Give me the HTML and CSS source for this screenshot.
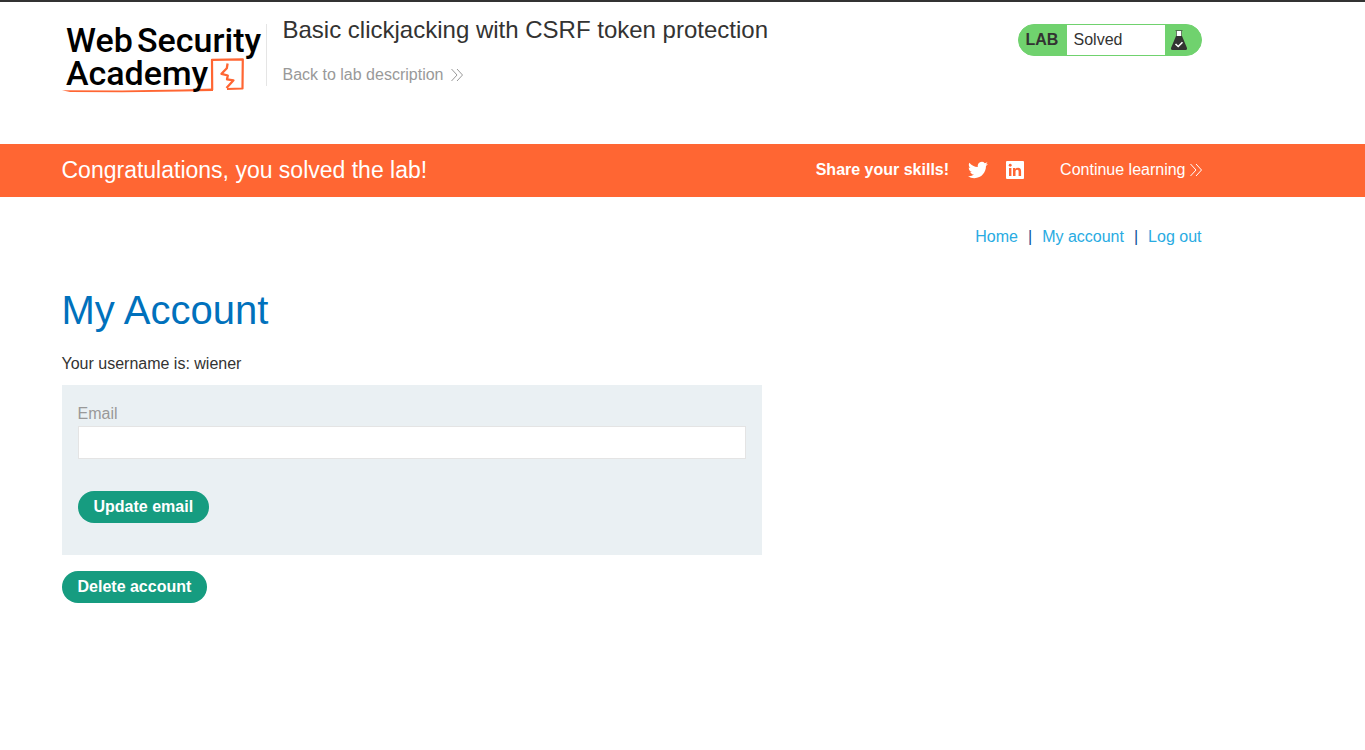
FILE: index.html
```html
<!DOCTYPE html>
<html lang="en">
<head>
<meta charset="utf-8">
<meta name="viewport" content="width=device-width, initial-scale=1">
<title>Basic clickjacking with CSRF token protection</title>
<link rel="stylesheet" href="styles.css">
</head>
<body>
<header class="lab-header">
  <div class="container lab-header-row">
    <a class="logo" href="#" aria-label="Web Security Academy">
      <svg width="200" height="72" viewBox="0 0 200 72">
        <path fill="#ff6633" d="M0 68.200 L60 68.600 L120 67.400 L151 66.600 V68.900 L120 69.400 L60 70.300 L8 69.900 Z"/>
        <g fill="none" stroke="#ff6633" stroke-linejoin="round">
          <path stroke-width="2.200" d="M150.200 68 L150 37.800 L180.800 37.300 L180.500 66.500 L165 67"/>
          <path stroke-width="2.300" d="M165.600 41.500 L164.800 46.200 L159.500 51.800 L165.800 53.500 L165 57.300 L171.500 58.300 L164.500 66"/>
        </g>
        <g class="logo-text">
          <text x="4" y="30">Web</text>
          <text x="75" y="30">Security</text>
          <text x="4" y="63">Academy</text>
        </g>
      </svg>
    </a>
    <div class="title-block">
      <h2 class="title">Basic clickjacking with CSRF token protection</h2>
      <a class="back-link" href="#">Back to lab description
        <svg class="chevrons" width="12" height="14" viewBox="0 0 12 14"><path d="M.5 1 L6 7 L.5 13 M6 1 L11.500 7 L6 13"/></svg>
      </a>
    </div>
    <div class="status">
      <span class="status-tag">LAB</span>
      <p class="status-text">Solved</p>
      <span class="status-icon">
        <svg width="16" height="20" viewBox="0 0 16 20">
          <path fill="#fff" d="M5.500 1h5v5h-5z"/>
          <path fill="none" stroke="#333332" stroke-opacity=".6" d="M4.500 .5h7M5.500 1v5M10.500 1v5"/>
          <path fill="#333332" d="M5 6h6l5 12q.3 2-1.300 2H1.300Q-.3 20 0 18z"/>
          <path fill="none" stroke="#fff" stroke-width="1.600" d="M4.500 14 L7.200 16.500 L11.500 12.200"/>
        </svg>
      </span>
    </div>
  </div>
</header>
<section class="banner">
  <div class="container banner-row">
    <h4 class="banner-title">Congratulations, you solved the lab!</h4>
    <div class="share">
      <span class="share-label">Share your skills!</span>
      <a class="social" href="#" aria-label="Twitter">
        <svg width="20" height="18" viewBox="0 2 24 20"><path fill="#fff" d="M23.950 4.570a10 10 0 0 1-2.820.77 4.960 4.960 0 0 0 2.160-2.720 9.900 9.900 0 0 1-3.120 1.190 4.920 4.920 0 0 0-8.380 4.480C7.690 8.090 4.070 6.130 1.640 3.160a4.820 4.820 0 0 0-.67 2.480c0 1.710.87 3.210 2.190 4.100a4.900 4.900 0 0 1-2.230-.62v.06a4.920 4.920 0 0 0 3.950 4.830 5 5 0 0 1-2.210.08 4.940 4.940 0 0 0 4.600 3.420A9.870 9.870 0 0 1 0 19.540a14 14 0 0 0 7.550 2.210c9.050 0 14-7.500 14-13.980 0-.21 0-.42-.02-.63a9.940 9.940 0 0 0 2.420-2.570z"/></svg>
      </a>
      <a class="social" href="#" aria-label="LinkedIn">
        <svg width="18" height="18" viewBox="0 0 18 18"><rect width="18" height="18" rx="1" fill="#fff"/><path fill="#ff6633" d="M3 7h2.400v8H3zM7 7h2.300v1.200C10 7.200 10.800 6.800 12 6.800c2.300 0 3.100 1.400 3.100 3.600V15h-2.500v-4.200c0-1.100-.3-2-1.400-2s-1.700.8-1.700 2V15H7z"/><circle cx="4.200" cy="4.200" r="1.450" fill="#ff6633"/></svg>
      </a>
      <a class="continue" href="#">Continue learning
        <svg class="chevrons" width="12" height="14" viewBox="0 0 12 14"><path d="M.5 1 L6 7 L.5 13 M6 1 L11.500 7 L6 13"/></svg>
      </a>
    </div>
  </div>
</section>
<main class="container">
  <nav class="top-links">
    <a href="#">Home</a><span>|</span><a href="#">My account</a><span>|</span><a href="#">Log out</a>
  </nav>
  <h1 class="page-title">My Account</h1>
  <p class="username">Your username is: wiener</p>
  <form class="email-form">
    <label class="label" for="email">Email</label>
    <input class="input" id="email" type="email" name="email">
    <button class="button" type="submit">Update email</button>
  </form>
  <form>
    <button class="button" type="submit">Delete account</button>
  </form>
</main>
</body>
</html>
```
FILE: styles.css
```css
* { box-sizing: border-box; }

body {
  margin: 0;
  border-top: 2px solid #333332;
  background: #fff;
  color: #333332;
  font: 16px/24px "Liberation Sans", Arial, sans-serif;
}

h1, h2, h4, p { margin: 0; font-weight: 400; }
a { color: #29abe2; text-decoration: none; }

.container {
  max-width: 1242px;
  margin: 0 auto;
  padding-right: 102px;
}

.lab-header-row {
  display: flex;
  align-items: flex-start;
  min-height: 142px;
}

.logo { margin-top: 20px; flex: none; }
.logo svg { display: block; overflow: visible; }
.logo-text {
  fill: #000;
  font: 500 34px/32px Roboto, "Liberation Sans", sans-serif;
}

.title-block {
  flex: 1;
  margin-left: 4px;
  padding: 12px 0 0 17px;
  background: linear-gradient(#e5e5e5, #e5e5e5) 0 22px / 1px 62px no-repeat;
}
.title { font-size: 24px; line-height: 32px; }
.back-link {
  display: inline-flex;
  align-items: center;
  gap: 8px;
  margin-top: 17px;
  color: #999;
}
.chevrons { fill: none; stroke: currentColor; stroke-width: 1; }

.status {
  display: flex;
  align-items: stretch;
  width: 184px;
  height: 32px;
  margin-top: 22px;
  border: 1px solid #70d26e;
  border-radius: 16px;
  background: #70d26e;
  line-height: 30px;
  overflow: hidden;
}
.status-tag { width: 48px; padding-left: 7px; font-weight: 700; }
.status-text { flex: 1; padding-left: 7px; background: #fff; }
.status-icon { display: flex; align-items: center; width: 36px; padding-left: 6px; }

.banner { background: #ff6633; color: #fff; }
.banner-row {
  display: flex;
  align-items: center;
  justify-content: space-between;
  min-height: 53px;
  padding-bottom: 2px;
}
.banner-title { font-size: 23px; line-height: 32px; }
.share { display: flex; align-items: center; }
.share-label { margin-right: 19px; font-weight: 700; }
.social { display: flex; margin-right: 18px; }
.continue {
  display: flex;
  align-items: center;
  gap: 4px;
  margin-left: 18px;
  color: #fff;
}

.top-links {
  display: flex;
  justify-content: flex-end;
  gap: 10px;
  padding-top: 28px;
  color: #0b5394;
}
.page-title {
  margin-top: 37px;
  color: #0071bc;
  font-size: 40px;
  line-height: 48px;
}
.username { margin-top: 18px; }

.email-form {
  max-width: 700px;
  margin: 9px 0 16px;
  padding: 16px 16px 32px;
  background: #eaf0f3;
}
.label { display: block; line-height: 25px; color: #999; }
.input {
  display: block;
  width: 100%;
  height: 33px;
  margin-bottom: 32px;
  padding: 0 8px;
  border: 1px solid #e4e4e4;
  background: #fff;
  font: inherit;
}
.button {
  display: block;
  height: 32px;
  padding: 0 16px;
  border: 0;
  border-radius: 16px;
  background: #169c80;
  color: #fff;
  font: inherit;
  font-weight: 700;
}
```
